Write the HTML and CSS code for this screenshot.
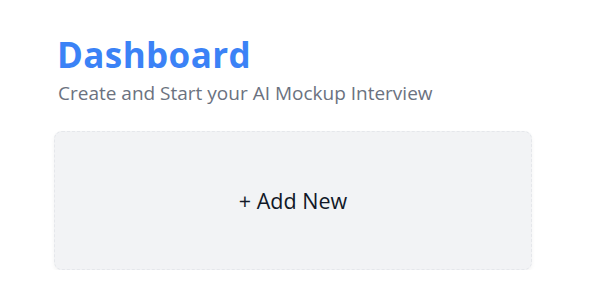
FILE: index.html
```html
<!DOCTYPE html>
<html>
<head>
<meta charset="utf-8">
<link rel="stylesheet" href="styles.css">
</head>
<body>
<main class="page">
  <h2 class="title">Dashboard</h2>
  <p class="subtitle">Create and Start your AI Mockup Interview</p>
  <div class="grid">
    <div class="add-card">
      <span class="add-label">+ Add New</span>
    </div>
  </div>
</main>
</body>
</html>
```
FILE: styles.css
```css
html, body {
  margin: 0;
  padding: 0;
  background: #ffffff;
}
body {
  font-family: "Open Sans", "Noto Sans", sans-serif;
}
.page {
  padding: 33px 64px 0 54px;
}
.title {
  margin: 0 0 0 3px;
  font-size: 35px;
  line-height: 44px;
  font-weight: 700;
  letter-spacing: 0.4px;
  color: #3b82f6;
}
.subtitle {
  margin: 3px 0 0 4px;
  font-size: 19px;
  line-height: 26px;
  color: #6b7280;
}
.grid {
  margin-top: 25px;
  width: 478px;
}
.add-card {
  height: 139px;
  box-sizing: border-box;
  border: 1px dashed #e5e7eb;
  border-radius: 8px;
  background: #f2f3f5;
  box-shadow: 0 2px 4px rgba(0,0,0,0.05);
  display: flex;
  align-items: center;
  justify-content: center;
}
.add-label {
  font-size: 21.5px;
  color: #111827;
}
```
